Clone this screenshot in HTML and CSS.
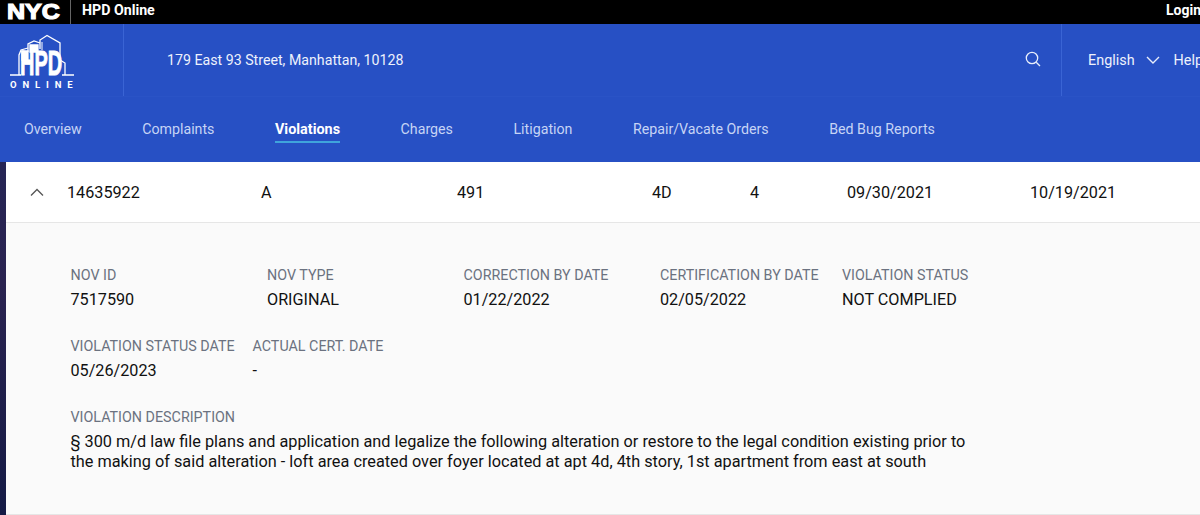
FILE: index.html
```html
<!DOCTYPE html>
<html lang="en">
<head>
<meta charset="utf-8">
<title>HPD Online</title>
<link rel="stylesheet" href="styles.css">
</head>
<body>
<div class="topbar">
  <div class="nyc"><span>NYC</span></div>
  <div class="topbar-title">HPD Online</div>
  <div class="login">Login</div>
</div>
<header class="header">
  <div class="logo">
    <svg class="logo-art" width="70" height="44" viewBox="10 34 70 44" fill="none" stroke="#fff" stroke-width="1.3">
      <path d="M10 75H21M62 75H74"/>
      <path d="M65 75V63L60 60V43L47 35.5L40 40V49"/>
      <path d="M40 43L34 41L28 44V52"/>
      <path d="M28 48L21 50L19 55V75"/>
      <path d="M22 51H28V60H22Z M30 45H38V52H30Z" fill="#fff"/>
      <path d="M42 42V50" stroke-width="1"/>
    </svg>
    <div class="logo-hpd">HPD</div>
    <div class="logo-online">ONLINE</div>
  </div>
  <div class="address">179 East 93 Street, Manhattan, 10128</div>
  <div class="search">
    <svg width="16" height="16" viewBox="0 0 16 16" fill="none" stroke="#e8eefb" stroke-width="1.3"><circle cx="7" cy="7" r="5.7"/><path d="M11.2 11.2L15 15"/></svg>
  </div>
  <div class="lang">
    <span class="lang-item">English</span>
    <svg class="lang-chev" width="14" height="8" viewBox="0 0 14 8" fill="none" stroke="#e8eefb" stroke-width="1.4"><path d="M1 1l6 6 6-6"/></svg>
    <span class="lang-item help">Help</span>
  </div>
</header>
<nav class="nav">
  <a>Overview</a>
  <a>Complaints</a>
  <a class="active">Violations</a>
  <a>Charges</a>
  <a>Litigation</a>
  <a>Repair/Vacate Orders</a>
  <a>Bed Bug Reports</a>
</nav>
<main class="main">
  <div class="row">
    <svg class="chev" width="14" height="8" viewBox="0 0 14 8" fill="none" stroke="#555" stroke-width="1.3"><path d="M1 7.5l6-6 6 6"/></svg>
    <span class="c1">14635922</span>
    <span class="c2">A</span>
    <span class="c3">491</span>
    <span class="c4">4D</span>
    <span class="c5">4</span>
    <span class="c6">09/30/2021</span>
    <span class="c7">10/19/2021</span>
  </div>
  <section class="detail">
    <div class="fields">
      <div class="f w1"><label>NOV ID</label><p>7517590</p></div>
      <div class="f w1"><label>NOV TYPE</label><p>ORIGINAL</p></div>
      <div class="f w1"><label>CORRECTION BY DATE</label><p>01/22/2022</p></div>
      <div class="f w2"><label>CERTIFICATION BY DATE</label><p>02/05/2022</p></div>
      <div class="f"><label>VIOLATION STATUS</label><p>NOT COMPLIED</p></div>
    </div>
    <div class="fields">
      <div class="f w3"><label>VIOLATION STATUS DATE</label><p>05/26/2023</p></div>
      <div class="f"><label>ACTUAL CERT. DATE</label><p>-</p></div>
    </div>
    <div class="f desc">
      <label>VIOLATION DESCRIPTION</label>
      <p>§ 300 m/d law file plans and application and legalize the following alteration or restore to the legal condition existing prior to<br>the making of said alteration - loft area created over foyer located at apt 4d, 4th story, 1st apartment from east at south</p>
    </div>
  </section>
</main>
</body>
</html>
```
FILE: styles.css
```css
* { box-sizing: border-box; }
html, body { margin: 0; padding: 0; }
body { width: 1200px; height: 515px; overflow: hidden; background: linear-gradient(#20285c, #2a2350 55%, #141a45); font-family: Roboto, "Liberation Sans", sans-serif; color: #111; }
.topbar { height: 24px; background: #000; color: #fff; display: flex; position: relative; }
.nyc { width: 71px; height: 24px; padding: 1px 0 0 7px; border-right: 1px solid #666; }
.nyc span { display: block; width: 50px; font: 700 22px/21px "Liberation Sans", sans-serif; -webkit-text-stroke: 1.2px #fff; transform: scaleX(1.14); transform-origin: left; }
.topbar-title { padding-left: 11px; font-size: 14.2px; line-height: 21px; font-weight: 700; flex: 1; }
.login { width: 34px; font-size: 14px; line-height: 21px; font-weight: 700; white-space: nowrap; }
.header { height: 73px; background: #2750c4; color: #eef2fc; display: flex; border-bottom: 1px solid #2a53c6; }
.logo { width: 124px; flex: none; border-right: 1px solid #3a64d4; position: relative; }
.logo-art { position: absolute; left: 10px; top: 10px; }
.logo-hpd { position: absolute; left: 20px; top: 25px; font: 700 35px/28px "Liberation Sans", sans-serif; color: #fff; transform: scaleX(.57); transform-origin: left; -webkit-text-stroke: .9px #fff; }
.logo-online { position: absolute; left: 10px; top: 55px; font-size: 9.5px; line-height: 11px; font-weight: 700; letter-spacing: 5.9px; color: #fff; white-space: nowrap; }
.address { flex: 1; padding-left: 43px; font-size: 14.2px; line-height: 72px; }
.search { width: 62px; flex: none; border-right: 1px solid #3a64d4; padding: 27px 0 0 25px; }
.search svg { display: block; }
.lang { width: 138px; flex: none; padding-left: 26px; display: flex; align-items: center; gap: 11px; font-size: 14.4px; white-space: nowrap; }
.lang-item, .lang-chev { flex: none; }
.help { margin-left: 3px; }
.nav { height: 65px; background: #2750c4; display: flex; gap: 60.5px; padding: 24px 0 0 24px; font-size: 14.22px; color: #c6d4f5; }
.nav a { height: 22px; line-height: 17px; white-space: nowrap; }
.nav .active { color: #fff; font-weight: 700; font-size: 14.4px; border-bottom: 2px solid #3fa4dc; }
.main { margin-left: 6px; background: #fff; }
.row { height: 61px; border-bottom: 1px solid #e6e6e6; display: flex; align-items: center; font-size: 16.2px; position: relative; padding-left: 24px; }
.chev { flex: none; width: 14px; margin-right: 23px; }
.row span { flex: none; }
.c1 { width: 194px; }
.c2 { width: 196px; }
.c3 { width: 195px; }
.c4 { width: 98px; }
.c5 { width: 97px; }
.c6 { width: 183px; }
.detail { background: #fafafa; height: 292px; border-bottom: 1px solid #e6e6e6; padding: 44px 0 0 64.5px; }
.fields { display: flex; height: 71px; }
.f label { display: block; font-size: 14.3px; line-height: 16px; color: #6b7280; white-space: nowrap; }
.f p { margin: 7px 0 0; font-size: 16.2px; line-height: 19px; color: #111; white-space: nowrap; }
.w1 { width: 196.5px; }
.w2 { width: 182px; }
.w3 { width: 182px; }
.desc p { margin-top: 6.5px; font-size: 16.3px; line-height: 20px; }
```
